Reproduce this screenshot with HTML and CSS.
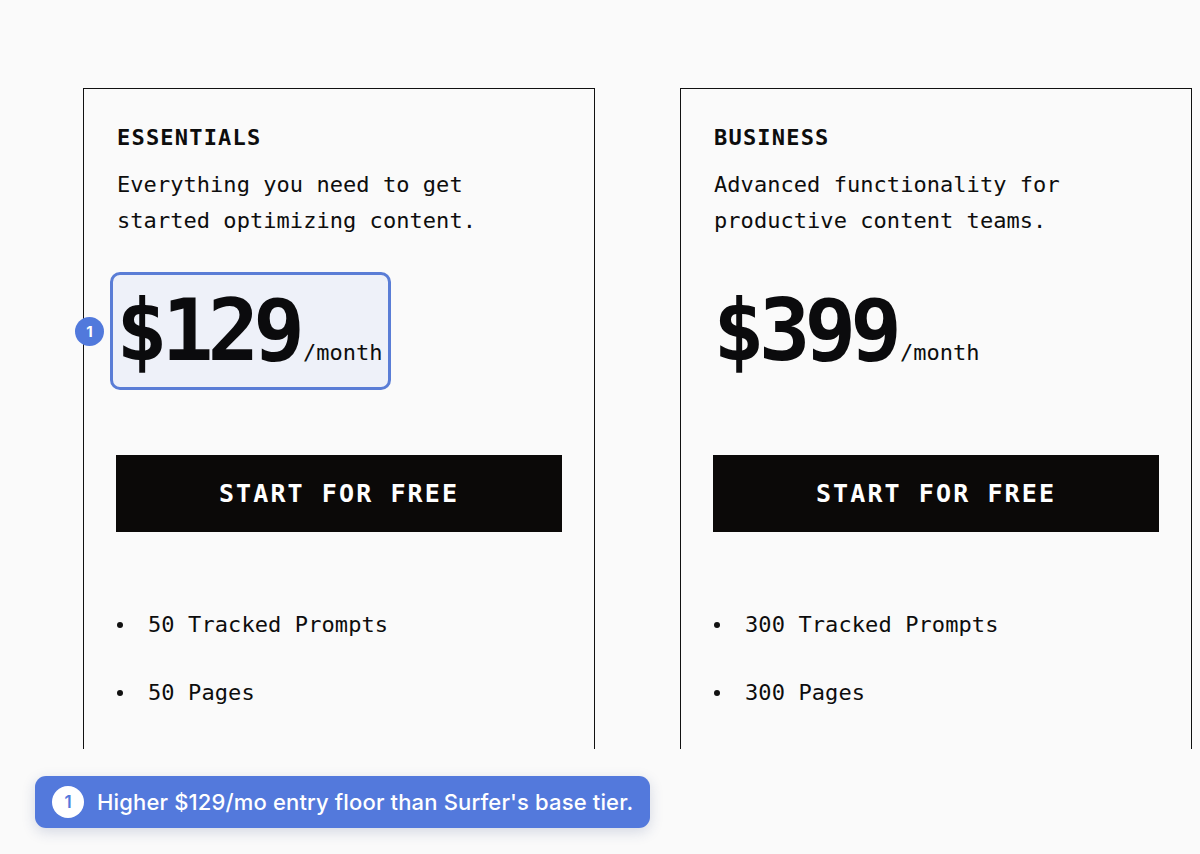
FILE: index.html
```html
<!DOCTYPE html>
<html>
<head>
<meta charset="utf-8">
<link rel="stylesheet" href="styles.css">
</head>
<body>
<div class="viewport">
  <div class="card">
    <h2 class="title">ESSENTIALS</h2>
    <p class="desc">Everything you need to get started optimizing content.</p>
    <div class="price-row">
      <span class="price-wrap">
        <span class="hl"></span>
        <span class="marker">1</span>
        <span class="price">$129</span><span class="per">/month</span>
      </span>
    </div>
    <a class="cta">START FOR FREE</a>
    <ul class="features">
      <li>50 Tracked Prompts</li>
      <li>50 Pages</li>
    </ul>
  </div>
  <div class="card">
    <h2 class="title">BUSINESS</h2>
    <p class="desc">Advanced functionality for productive content teams.</p>
    <div class="price-row">
      <span class="price-wrap">
        <span class="price">$399</span><span class="per">/month</span>
      </span>
    </div>
    <a class="cta">START FOR FREE</a>
    <ul class="features">
      <li>300 Tracked Prompts</li>
      <li>300 Pages</li>
    </ul>
  </div>
</div>
<div class="note">
  <span class="note-num">1</span>
  <span class="note-text">Higher $129/mo entry floor than Surfer's base tier.</span>
</div>
</body>
</html>
```

FILE: styles.css
```css
html, body {
  margin: 0;
  padding: 0;
  background: #fafafa;
}
body {
  font-family: "DejaVu Sans Mono", "Liberation Mono", monospace;
  color: #0d0d0d;
  width: 1200px;
  height: 854px;
  position: relative;
  overflow: hidden;
}
.viewport {
  height: 749px;
  overflow: hidden;
  box-sizing: border-box;
  padding: 88px 0 0 83px;
  display: flex;
  gap: 85px;
}
.card {
  flex: 0 0 512px;
  box-sizing: border-box;
  border: 1px solid #111;
  height: 900px;
  padding: 34px 32px 0 32px;
}
.title {
  margin: 0;
  font-size: 22px;
  line-height: 30px;
  font-weight: bold;
  letter-spacing: 1.2px;
  padding-left: 1px;
}
.desc {
  margin: 14px 0 0 0;
  font-size: 22px;
  line-height: 36px;
  letter-spacing: 0.05px;
  padding-left: 1px;
  width: 390px;
}
.price-row {
  margin-top: 36px;
  height: 100px;
  display: flex;
  align-items: flex-end;
}
.price-wrap {
  position: relative;
  display: inline-flex;
  align-items: baseline;
}
.hl {
  position: absolute;
  left: -6px;
  right: -8px;
  top: -13px;
  bottom: -15px;
  border: 3px solid #5a7dd6;
  border-radius: 10px;
  background: #eef1f9;
}
.marker {
  position: absolute;
  left: -41px;
  top: 32px;
  width: 29px;
  height: 29px;
  border-radius: 50%;
  background: #5179dc;
  color: #fff;
  font-family: Inter, "Noto Sans", sans-serif;
  font-weight: 700;
  font-size: 15px;
  line-height: 29px;
  text-align: center;
}
.price {
  position: relative;
  font-size: 86px;
  font-weight: bold;
  letter-spacing: -6px;
  line-height: 90px;
  color: #0b0b0d;
}
.per {
  position: relative;
  font-size: 22px;
  letter-spacing: 0px;
  margin-left: 4px;
}
.cta {
  display: block;
  margin-top: 80px;
  height: 77px;
  background: #0b0908;
  color: #fff;
  text-align: center;
  font-weight: bold;
  font-size: 25px;
  line-height: 77px;
  letter-spacing: 2.1px;
}
.features {
  margin: 59px 0 0 0;
  padding: 0;
  list-style: none;
}
.features li {
  position: relative;
  padding-left: 32px;
  font-size: 22px;
  line-height: 68px;
  letter-spacing: 0.1px;
}
.features li::before {
  content: "";
  position: absolute;
  left: 1px;
  top: 31px;
  width: 6px;
  height: 6px;
  border-radius: 50%;
  background: #111;
}
.note {
  position: absolute;
  left: 35px;
  top: 776px;
  height: 52px;
  box-sizing: border-box;
  padding: 0 17px 0 17px;
  display: flex;
  align-items: center;
  gap: 13px;
  background: #5379dc;
  border-radius: 11px;
  box-shadow: 0 4px 14px rgba(40, 60, 120, 0.18);
  font-family: Inter, "Noto Sans", sans-serif;
}
.note-num {
  width: 32px;
  height: 32px;
  border-radius: 50%;
  background: #fff;
  color: #5379dc;
  font-weight: 600;
  font-size: 17px;
  line-height: 32px;
  text-align: center;
}
.note-text {
  color: #fff;
  font-weight: 500;
  font-size: 22px;
  letter-spacing: 0.15px;
}
```
